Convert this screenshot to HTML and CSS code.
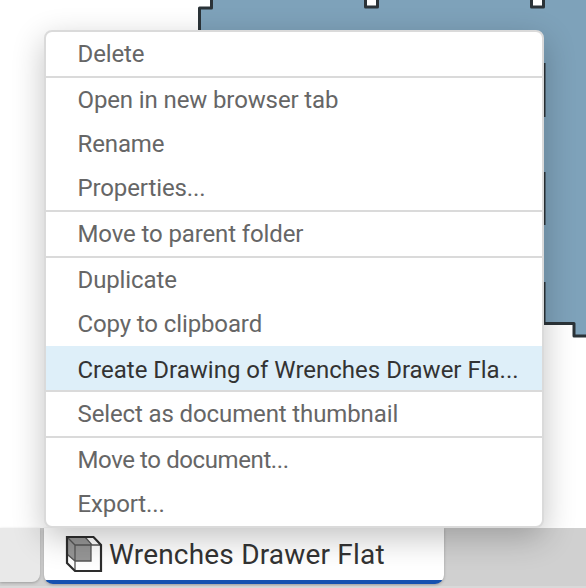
FILE: index.html
```
<!DOCTYPE html>
<html lang="en">
<head>
<meta charset="utf-8">
<title>Wrenches Drawer Flat</title>
<link rel="stylesheet" href="styles.css">
</head>
<body>
<div class="app">
  <main class="stage">
    <svg class="part" width="586" height="528" viewBox="0 0 586 528">
      <path d="M199.500 323.500V8H211.500V-4H592V336H574V323.500Z" fill="#7ea2ba"/>
      <path d="M365.500 -4V7H377.500V-4M531.500 -4V7H543.500V-4" fill="#fff"/>
      <path d="M199.500 60V8H211.500V-4M365.500 -4V7H377.500V-4M531.500 -4V7H543.500V-4M544 63V117M544 172V225M544 282V323.500H574V336H592" fill="none" stroke="#2b3338" stroke-width="3" stroke-linejoin="round"/>
    </svg>
  </main>
  <footer class="tabs">
    <div class="tab tab-previous"></div>
    <div class="tab tab-active">
      <svg class="cube" width="38" height="38" viewBox="0 0 38 38">
        <path d="M2 2H28.500L36 10V36H10L2 28Z" fill="#fff"/>
        <path d="M2 2H20L26 10V26H10L2 20Z" fill="#969696"/>
        <path d="M2 2L10 10H36M10 10V36M20 2L27 10M26 10V26H10L2 19" fill="none" stroke="#555" stroke-width="1.300"/>
        <path d="M2 2H28.500L36 10V36H10L2 28Z" fill="none" stroke="#2d2d2d" stroke-width="2.200"/>
      </svg>
      <span class="tab-name">Wrenches Drawer Flat</span>
    </div>
  </footer>
  <nav class="menu">
    <div class="group"><div class="item">Delete</div></div>
    <div class="group">
      <div class="item">Open in new browser tab</div>
      <div class="item">Rename</div>
      <div class="item">Properties...</div>
    </div>
    <div class="group"><div class="item">Move to parent folder</div></div>
    <div class="group">
      <div class="item">Duplicate</div>
      <div class="item">Copy to clipboard</div>
      <div class="item item-hover">Create Drawing of Wrenches Drawer Fla...</div>
    </div>
    <div class="group"><div class="item">Select as document thumbnail</div></div>
    <div class="group">
      <div class="item item-tight">Move to document...</div>
      <div class="item">Export...</div>
    </div>
  </nav>
</div>
</body>
</html>
```
FILE: styles.css
```
* { box-sizing: border-box; }
body { margin: 0; font-family: Roboto, "Liberation Sans", sans-serif; }
.app {
  position: relative;
  display: flex;
  flex-direction: column;
  width: 586px;
  height: 588px;
  overflow: hidden;
  background: #fff;
}
.stage { height: 528px; }
.part { display: block; }
.tabs {
  display: flex;
  align-items: flex-start;
  gap: 4px;
  height: 60px;
  background: #d0d0d0;
  border-bottom: 2px solid #d9d9d9;
}
.tab { box-shadow: 0 1px 3px rgba(0, 0, 0, .25); }
.tab-previous {
  width: 40px;
  height: 54px;
  background: #e9e9e9;
  border-radius: 0 0 8px 0;
}
.tab-active {
  display: flex;
  align-items: center;
  gap: 6px;
  width: 400px;
  height: 56px;
  padding: 0 0 0 21px;
  overflow: hidden;
  background: linear-gradient(#1651b0, #1651b0) bottom / 100% 4px no-repeat #fff;
  border-radius: 0 0 9px 9px;
}
.cube { flex: none; margin-top: -4px; }
.tab-name {
  margin-top: -2px;
  font-size: 28px;
  line-height: 32px;
  letter-spacing: .19px;
  white-space: nowrap;
  color: #333;
}
.menu {
  position: absolute;
  left: 44px;
  top: 30px;
  width: 500px;
  height: 498px;
  overflow: hidden;
  background: #fff;
  border: 2px solid #dadada;
  border-radius: 8px;
  box-shadow: 0 10px 32px rgba(0, 0, 0, .24);
}
.group + .group { border-top: 2px solid #dadada; }
.item {
  height: 44px;
  padding-left: 31.5px;
  font-size: 24px;
  line-height: 44px;
  letter-spacing: -.12px;
  white-space: nowrap;
  color: #666;
}
.item-tight { letter-spacing: -.4px; }
.item-hover {
  padding-top: 2px;
  letter-spacing: 0;
  color: #333;
  background: #deeff9;
}
```
